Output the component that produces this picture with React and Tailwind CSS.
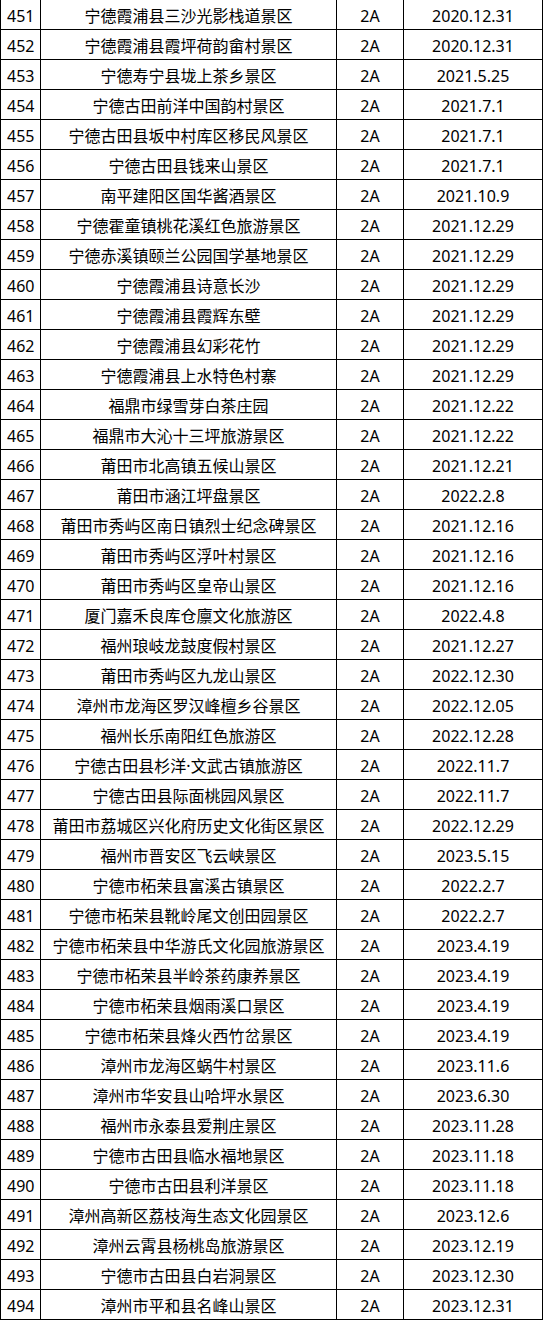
import React from 'react';

// 福建 2A 景区名录（451–494）

const rows = [
  [451, '宁德霞浦县三沙光影栈道景区', '2020.12.31'],
  [452, '宁德霞浦县霞坪荷韵畲村景区', '2020.12.31'],
  [453, '宁德寿宁县垅上茶乡景区', '2021.5.25'],
  [454, '宁德古田前洋中国韵村景区', '2021.7.1'],
  [455, '宁德古田县坂中村库区移民风景区', '2021.7.1'],
  [456, '宁德古田县钱来山景区', '2021.7.1'],
  [457, '南平建阳区国华酱酒景区', '2021.10.9'],
  [458, '宁德霍童镇桃花溪红色旅游景区', '2021.12.29'],
  [459, '宁德赤溪镇颐兰公园国学基地景区', '2021.12.29'],
  [460, '宁德霞浦县诗意长沙', '2021.12.29'],
  [461, '宁德霞浦县霞辉东壁', '2021.12.29'],
  [462, '宁德霞浦县幻彩花竹', '2021.12.29'],
  [463, '宁德霞浦县上水特色村寨', '2021.12.29'],
  [464, '福鼎市绿雪芽白茶庄园', '2021.12.22'],
  [465, '福鼎市大沁十三坪旅游景区', '2021.12.22'],
  [466, '莆田市北高镇五候山景区', '2021.12.21'],
  [467, '莆田市涵江坪盘景区', '2022.2.8'],
  [468, '莆田市秀屿区南日镇烈士纪念碑景区', '2021.12.16'],
  [469, '莆田市秀屿区浮叶村景区', '2021.12.16'],
  [470, '莆田市秀屿区皇帝山景区', '2021.12.16'],
  [471, '厦门嘉禾良库仓廪文化旅游区', '2022.4.8'],
  [472, '福州琅岐龙鼓度假村景区', '2021.12.27'],
  [473, '莆田市秀屿区九龙山景区', '2022.12.30'],
  [474, '漳州市龙海区罗汉峰檀乡谷景区', '2022.12.05'],
  [475, '福州长乐南阳红色旅游区', '2022.12.28'],
  [476, '宁德古田县杉洋·文武古镇旅游区', '2022.11.7'],
  [477, '宁德古田县际面桃园风景区', '2022.11.7'],
  [478, '莆田市荔城区兴化府历史文化街区景区', '2022.12.29'],
  [479, '福州市晋安区飞云峡景区', '2023.5.15'],
  [480, '宁德市柘荣县富溪古镇景区', '2022.2.7'],
  [481, '宁德市柘荣县靴岭尾文创田园景区', '2022.2.7'],
  [482, '宁德市柘荣县中华游氏文化园旅游景区', '2023.4.19'],
  [483, '宁德市柘荣县半岭茶药康养景区', '2023.4.19'],
  [484, '宁德市柘荣县烟雨溪口景区', '2023.4.19'],
  [485, '宁德市柘荣县烽火西竹岔景区', '2023.4.19'],
  [486, '漳州市龙海区蜗牛村景区', '2023.11.6'],
  [487, '漳州市华安县山哈坪水景区', '2023.6.30'],
  [488, '福州市永泰县爱荆庄景区', '2023.11.28'],
  [489, '宁德市古田县临水福地景区', '2023.11.18'],
  [490, '宁德市古田县利洋景区', '2023.11.18'],
  [491, '漳州高新区荔枝海生态文化园景区', '2023.12.6'],
  [492, '漳州云霄县杨桃岛旅游景区', '2023.12.19'],
  [493, '宁德市古田县白岩洞景区', '2023.12.30'],
  [494, '漳州市平和县名峰山景区', '2023.12.31'],
];

const cell = 'h-[30px] pt-[3px] flex items-center justify-center whitespace-nowrap border-r border-b border-black';

export default function App() {
  return (
    <div className="bg-white w-[544px] h-[1321px] overflow-hidden">
      <div
        className="w-[543px] grid grid-cols-[40px_296px_67px_139px] border-l border-black text-[16px] text-black"
        style={{ fontFamily: '"Noto Sans", "Noto Sans CJK SC", sans-serif' }}
      >
        {rows.map(([no, name, date]) => (
          <React.Fragment key={no}>
            <div className={`${cell} justify-start pl-[6px]`}>{no}</div>
            <div className={cell}>{name}</div>
            <div className={cell}>2A</div>
            <div className={cell}>{date}</div>
          </React.Fragment>
        ))}
      </div>
    </div>
  );
}
